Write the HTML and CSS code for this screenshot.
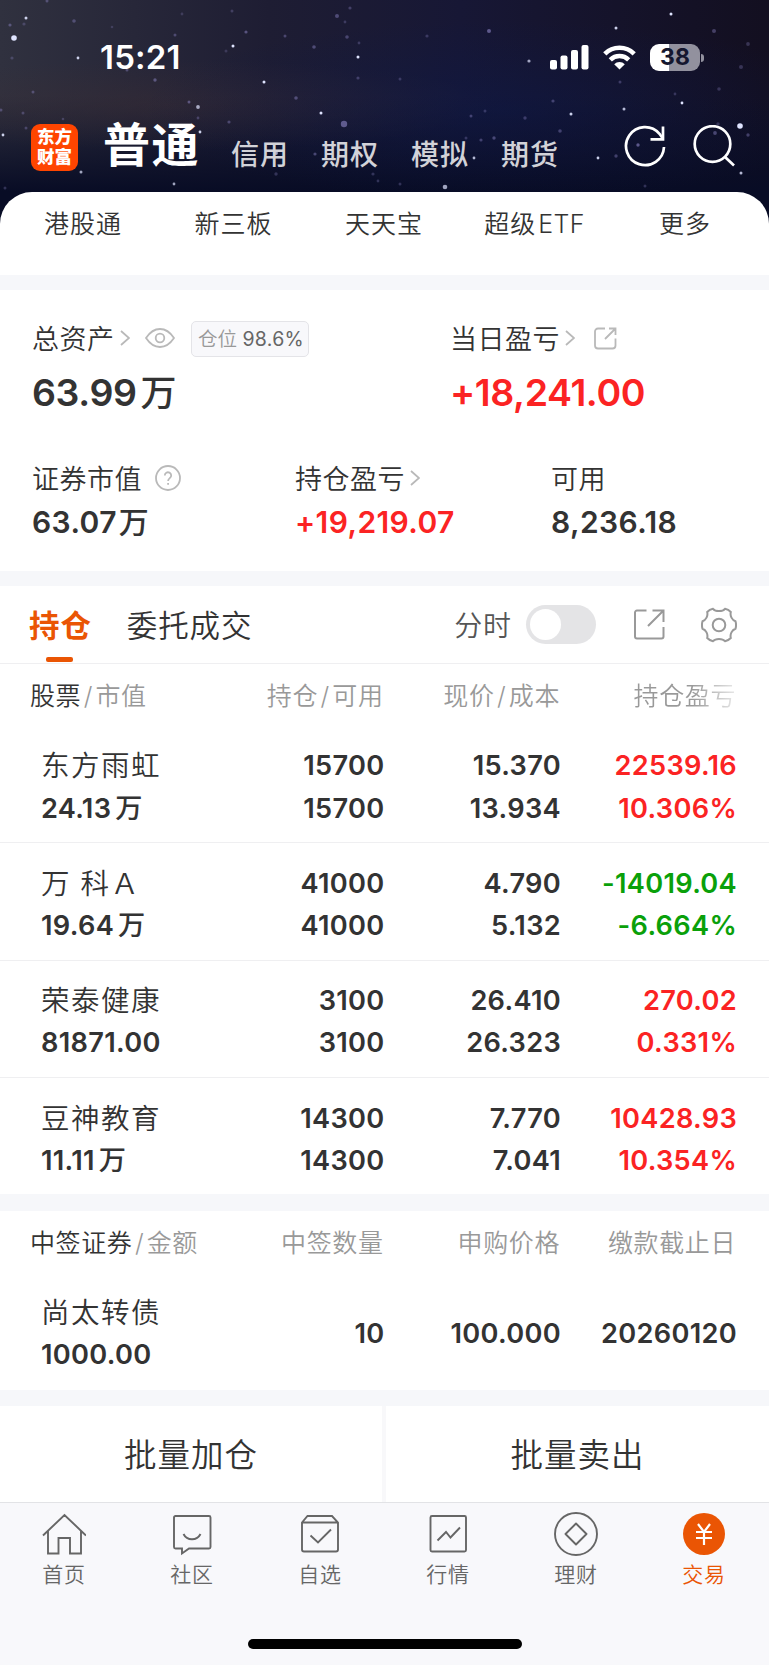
FILE: index.html
```html
<!DOCTYPE html>
<html lang="zh-CN">
<head>
  <meta charset="UTF-8" />
  <meta name="viewport" content="width=device-width, initial-scale=1.0" />
  <title>东方财富 - 交易</title>
  <link rel="stylesheet" href="styles.css">
</head>
<body>
  <header class="top">
    <svg class="stars" id="stars" viewBox="0 0 769 240"></svg>

    <div class="status-bar">
      <span class="time">15:21</span>
      <div class="status-icons">
        <svg width="39" height="25" viewBox="0 0 39 25" fill="#fff">
          <rect x="0" y="15" width="7" height="9.500" rx="2"/>
          <rect x="10.500" y="10.500" width="7" height="14" rx="2"/>
          <rect x="21" y="5" width="7" height="19.500" rx="2"/>
          <rect x="31.500" y="0" width="7" height="24.500" rx="2"/>
        </svg>
        <svg class="wifi" width="33" height="25" viewBox="0 0 33 25" fill="none" stroke="#fff" stroke-width="4.600">
          <path d="M1.800 8.800a21 21 0 0 1 29.400 0"/>
          <path d="M7.300 14.800a13.200 13.200 0 0 1 18.400 0"/>
          <path d="M16.500 24.500l-5.300-5.300a7.500 7.500 0 0 1 10.600 0z" fill="#fff" stroke="none"/>
        </svg>
        <div class="battery"><span>38</span></div>
      </div>
    </div>

    <nav class="accounts">
      <div class="logo"><span>东方</span><span>财富</span></div>
      <strong>普通</strong>
      <a>信用</a>
      <a>期权</a>
      <a>模拟</a>
      <a>期货</a>
      <div class="top-icons">
        <svg width="42" height="42" viewBox="0 0 42 42" fill="none" stroke="#fff" stroke-width="2.700">
          <path d="M40 22a19 19 0 1 1-4.500-13.200l3.500 5"/>
          <path d="M39 1.500v12.800H26.500"/>
        </svg>
        <svg width="42" height="42" viewBox="0 0 42 42" fill="none" stroke="#fff" stroke-width="2.700">
          <circle cx="19.500" cy="19" r="17.800"/>
          <path d="M31.500 31.500l9.500 9"/>
        </svg>
      </div>
    </nav>
  </header>

  <section class="shortcuts">
    <a>港股通</a>
    <a>新三板</a>
    <a>天天宝</a>
    <a>超级<span>ETF</span></a>
    <a>更多</a>
  </section>

  <section class="assets">
    <div class="assets-main">
      <div class="asset">
        <div class="label">总资产
          <svg class="arrow" width="10" height="16" viewBox="0 0 10 16"><path d="M1 1l8 7-8 7"/></svg>
          <svg class="eye" width="30" height="20" viewBox="0 0 30 20"><path d="M1 10C5 4 10 1 15 1s10 3 14 9c-4 6-9 9-14 9S5 16 1 10z"/><circle cx="15" cy="10" r="4.300"/></svg>
          <span class="position">仓位 <b>98.6%</b></span>
        </div>
        <div class="value">63.99<i>万</i></div>
      </div>
      <div class="asset">
        <div class="label">当日盈亏
          <svg class="arrow" width="10" height="16" viewBox="0 0 10 16"><path d="M1 1l8 7-8 7"/></svg>
          <svg class="share-small" width="23" height="23" viewBox="0 0 23 23"><path d="M11 1.500H4A3 3 0 0 0 1 4.500V18.500a3 3 0 0 0 3 3H18.500a3 3 0 0 0 3-3V11.500M15 1.500h6.500V8M21.500 1.500L11 12"/></svg>
        </div>
        <div class="value red">+18,241.00</div>
      </div>
    </div>
    <div class="assets-sub">
      <div class="asset">
        <div class="label">证券市值
          <svg class="help" width="26" height="26" viewBox="0 0 26 26"><circle cx="13" cy="13" r="12"/><path d="M9.800 10.500a3.200 3.200 0 1 1 5 2.600c-1.200.900-1.700 1.400-1.700 2.900M13.100 18v1.800"/></svg>
        </div>
        <div class="value">63.07<i>万</i></div>
      </div>
      <div class="asset">
        <div class="label">持仓盈亏
          <svg class="arrow" width="10" height="16" viewBox="0 0 10 16"><path d="M1 1l8 7-8 7"/></svg>
        </div>
        <div class="value red">+19,219.07</div>
      </div>
      <div class="asset">
        <div class="label">可用</div>
        <div class="value">8,236.18</div>
      </div>
    </div>
  </section>

  <section class="holdings">
    <div class="tabs">
      <a class="active">持仓</a>
      <a>委托成交</a>
      <div class="tools">
        <span>分时</span>
        <div class="switch"></div>
        <svg width="31" height="31" viewBox="0 0 31 31"><path d="M12.500 1.500h-9.500a2 2 0 0 0-2 2V27.500a2 2 0 0 0 2 2H27.500a2 2 0 0 0 2-2V18M18.500 1.500h11V13M29.500 1.500L14 17"/></svg>
        <svg class="gear" width="36" height="36" viewBox="0 0 36 36"><path d="M12 1.800C14.500 4.800 21.500 4.800 24 1.800Q27.500 2.500 29.800 5C28.800 9 31 13 34.500 14.200Q35.600 18 34.500 21.800C31 23 28.800 27 29.800 31Q27.500 33.500 24 34.200C21.500 31.200 14.500 31.200 12 34.200Q8.500 33.500 6.200 31C7.200 27 5 23 1.500 21.800Q.400 18 1.500 14.200C5 13 7.200 9 6.200 5Q8.500 2.500 12 1.800z"/><circle cx="18" cy="18" r="6.300"/></svg>
      </div>
    </div>
    <div class="row head">
      <span><em>股票</em><s>/</s>市值</span>
      <span>持仓<s>/</s>可用</span>
      <span>现价<s>/</s>成本</span>
      <span class="fade">持仓盈亏</span>
    </div>
    <div class="row">
      <div><span class="name">东方雨虹</span><b>24.13<i>万</i></b></div>
      <div><b>15700</b><b>15700</b></div>
      <div><b>15.370</b><b>13.934</b></div>
      <div class="red"><b>22539.16</b><b>10.306%</b></div>
    </div>
    <div class="row">
      <div><span class="name">万 科Ａ</span><b>19.64<i>万</i></b></div>
      <div><b>41000</b><b>41000</b></div>
      <div><b>4.790</b><b>5.132</b></div>
      <div class="green"><b>-14019.04</b><b>-6.664%</b></div>
    </div>
    <div class="row">
      <div><span class="name">荣泰健康</span><b>81871.00</b></div>
      <div><b>3100</b><b>3100</b></div>
      <div><b>26.410</b><b>26.323</b></div>
      <div class="red"><b>270.02</b><b>0.331%</b></div>
    </div>
    <div class="row">
      <div><span class="name">豆神教育</span><b>11.11<i>万</i></b></div>
      <div><b>14300</b><b>14300</b></div>
      <div><b>7.770</b><b>7.041</b></div>
      <div class="red"><b>10428.93</b><b>10.354%</b></div>
    </div>
  </section>

  <section class="lots">
    <div class="row head">
      <span><em>中签证券</em><s>/</s>金额</span>
      <span>中签数量</span>
      <span>申购价格</span>
      <span>缴款截止日</span>
    </div>
    <div class="row">
      <div><span class="name">尚太转债</span><b>1000.00</b></div>
      <div><b>10</b></div>
      <div><b>100.000</b></div>
      <div><b>20260120</b></div>
    </div>
  </section>

  <div class="actions">
    <a>批量加仓</a>
    <a>批量卖出</a>
  </div>

  <footer class="bottom">
    <nav>
      <a>
        <svg width="44" height="44" viewBox="0 0 44 44"><path d="M1 23.500L22.500 3 44 23.500M6 19v22.500H16.500V26H28v15.500H39V19"/></svg>
        首页
      </a>
      <a>
        <svg width="44" height="44" viewBox="0 0 44 44"><path d="M5.500 4H39a1.500 1.500 0 0 1 1.500 1.500V35a1.500 1.500 0 0 1-1.500 1.500H19L12 41.500v-5H5.500A1.500 1.500 0 0 1 4 35V5.500A1.500 1.500 0 0 1 5.500 4zM13.500 22c3.500 7 13.500 7 17 0"/></svg>
        社区
      </a>
      <a>
        <svg width="44" height="44" viewBox="0 0 44 44"><path d="M9.500 4H34l6 6.500V37.500a2 2 0 0 1-2 2H6a2 2 0 0 1-2-2V10.500zM4 10.500H40M12.500 23.500l7.500 7L33 17.500"/></svg>
        自选
      </a>
      <a>
        <svg width="44" height="44" viewBox="0 0 44 44"><rect x="4.500" y="4" width="35.500" height="35.500" rx="1.500"/><path d="M11.500 28.500l8.500-8.500 4.500 5.500 9.500-10"/></svg>
        行情
      </a>
      <a>
        <svg width="44" height="44" viewBox="0 0 44 44"><circle cx="22" cy="22" r="21"/><path d="M22 11.500L32.500 22 22 32.500 11.500 22z" stroke-linejoin="round"/></svg>
        理财
      </a>
      <a class="active">
        <svg width="44" height="44" viewBox="0 0 44 44"><circle cx="22" cy="22" r="21" fill="#ea5504" stroke="none"/><path d="M16 12L22 20 28 12M22 20V33M14 20H30M14 26H30" stroke="#fff" stroke-width="2.200"/></svg>
        交易
      </a>
    </nav>
    <div class="home-indicator"></div>
  </footer>

  <script>
    // x, y, radius, opacity
    const stars = [
      [14, 38, 2.8, 1], [26, 18, 1.5, .9], [10, 25, 1.6, .45], [24, 24, 1.6, .3], [74, 21, 1.8, .4],
      [47, 1, 1.5, .4], [78, 58, 1.4, .9], [12, 58, 1.6, .3], [33, 92, 1.5, .4], [23, 113, 1.5, .35],
      [3, 135, 1.4, .9], [1, 110, 1.5, .4], [26, 128, 1.5, .35], [63, 119, 1.3, .3], [81, 172, 1.5, .7],
      [5, 188, 1.5, .3], [155, 80, 1.7, .5], [175, 35, 1.5, .4], [182, 14, 1.4, .25], [127, 70, 1.5, .4],
      [112, 27, 1.3, .25], [189, 102, 1.5, .5], [198, 107, 1.9, .7], [198, 118, 1.4, .35], [200, 132, 1.4, .9],
      [229, 122, 1.6, .4], [233, 46, 1.5, 1], [226, 51, 1.5, .25], [246, 32, 1.6, .5], [232, 11, 1.5, .3],
      [264, 82, 1.5, 1], [285, 36, 1.5, .4], [296, 98, 1.8, .45], [321, 113, 1.5, 1], [344, 124, 3.2, .6],
      [314, 47, 1.8, .45], [337, 16, 2, .45], [350, 8, 1.6, .35], [345, 22, 1.4, .3], [347, 37, 1.8, .4],
      [358, 57, 1.5, 1], [358, 78, 1.6, .35], [359, 43, 1.4, .3], [174, 184, 1.4, .7], [276, 174, 1.7, .3],
      [315, 154, 1.6, .45], [373, 174, 1.6, .3], [378, 181, 1.4, .3], [400, 79, 1.5, .3], [427, 36, 1.6, .3],
      [489, 31, 2, .6], [529, 61, 1.6, .7], [616, 28, 1.5, .9], [671, 14, 1.5, 1], [714, 31, 2, .4],
      [748, 44, 1.9, .3], [741, 67, 2, .3], [719, 89, 1.8, .3], [682, 103, 1.4, 1], [624, 109, 1.5, .8],
      [571, 114, 1.5, .9], [553, 101, 1.6, .4], [525, 118, 1.7, .35], [471, 116, 1.5, .4], [485, 111, 1.5, .3],
      [560, 131, 1.8, .4], [494, 138, 1.7, .45], [481, 140, 1.6, .4], [466, 138, 1.5, .3], [474, 158, 1.4, .8],
      [518, 148, 2.4, .8], [598, 158, 1.4, .9], [638, 145, 1.7, .6], [740, 126, 2.8, 1], [748, 135, 1.7, .4],
      [718, 124, 1.7, .3], [715, 133, 1.9, .45], [741, 173, 1.5, .8], [616, 156, 1.7, .4], [445, 187, 2.3, .7],
      [400, 184, 1.5, .3], [645, 186, 1.5, .3], [675, 94, 1.4, .3], [620, 82, 1.5, .35], [276, 153, 1.9, .7]
    ];
    document.getElementById('stars').innerHTML = stars.map(([x, y, r, o]) =>
      `<circle cx="${x}" cy="${y}" r="${r}" fill="${o > .65 ? '#dfe4ff' : '#8f87c8'}" opacity="${o}"/>`
    ).join('');
  </script>
</body>
</html>
```
FILE: styles.css
```css
* {
  box-sizing: border-box;
}
body {
  margin: 0;
  font-family: Inter, 'Noto Sans CJK SC', sans-serif;
  font-weight: 350;
  color: #333;
  background: #fff;
}
i, em {
  font-style: normal;
}
.red {
  color: #fb2323;
}
.green {
  color: #0aa00a;
}

/* header */
.top {
  position: relative;
  height: 240px;
  margin-bottom: -48px;
  background:
    radial-gradient(ellipse 360px 90px at 500px 110px, rgba(12, 24, 72, .5), transparent),
    radial-gradient(ellipse 330px 45px at 170px 105px, rgba(58, 45, 52, .5), transparent),
    linear-gradient(to bottom, transparent 40%, #080c25 80%),
    linear-gradient(to right, #30313f, #1e1d33 35%, #171735 60%, #130f20);
}
.stars {
  position: absolute;
  inset: 0;
  filter: blur(.5px);
}
.status-bar {
  position: relative;
  display: flex;
  justify-content: space-between;
  padding: 37px 64px 0 100px;
  color: #fff;
}
.time {
  font-size: 33px;
  font-weight: 600;
  line-height: 41px;
  letter-spacing: .200px;
}
.status-icons {
  display: flex;
  align-items: center;
}
.wifi {
  margin: 0 14px 0 14px;
}
.battery {
  position: relative;
  width: 50px;
  height: 27px;
  border-radius: 9px;
  background: linear-gradient(to right, #fff 39%, #92919e 39%);
  color: #15172f;
  font-size: 23px;
  font-weight: 700;
  line-height: 27px;
  text-align: center;
  margin-right: 5px;
}
.battery::after {
  content: '';
  position: absolute;
  right: -4px;
  top: 10px;
  width: 3px;
  height: 8px;
  border-radius: 0 3px 3px 0;
  background: #92919e;
}
.accounts {
  position: relative;
  display: flex;
  align-items: center;
  height: 60px;
  margin-top: 38px;
  padding: 0 34px 0 31px;
}
.logo {
  display: flex;
  flex-direction: column;
  justify-content: center;
  width: 47px;
  height: 47px;
  margin-top: 2px;
  border-radius: 9px;
  background: #ff4500;
  color: #fff;
  font-size: 17.500px;
  font-weight: 900;
  line-height: 20px;
  text-align: center;
}
.accounts strong {
  margin: -2px 8px 0 25px;
  font-size: 47px;
  font-weight: 700;
  line-height: 60px;
  letter-spacing: 1.500px;
  color: #fff;
}
.accounts a {
  width: 90px;
  padding: 17px 0 0 23px;
  font-size: 28px;
  font-weight: 500;
  line-height: 34px;
  letter-spacing: 1px;
  white-space: nowrap;
  color: #d2d2d8;
}
.top-icons {
  display: flex;
  gap: 27px;
  margin-left: auto;
}

/* shortcuts */
.shortcuts {
  position: relative;
  display: grid;
  grid-template-columns: repeat(5, 150.500px);
  justify-content: center;
  height: 98px;
  padding: 15px 1px 0 0;
  border-bottom: 15px solid #f6f7fa;
  border-radius: 32px 32px 0 0;
  background: #fff;
  font-size: 25px;
  line-height: 34px;
  letter-spacing: 1px;
  text-align: center;
}
.shortcuts span {
  margin-left: 2px;
  letter-spacing: .300px;
}

/* assets */
.assets {
  height: 296px;
  padding: 28px 32px 0;
  border-bottom: 15px solid #f6f7fa;
}
.assets-main {
  display: grid;
  grid-template-columns: 418px 1fr;
  height: 141px;
}
.assets-sub {
  display: grid;
  grid-template-columns: 263px 256px 1fr;
}
.label {
  display: flex;
  align-items: center;
  height: 38px;
  font-size: 27px;
  letter-spacing: .500px;
  white-space: nowrap;
}
.label svg {
  position: relative;
  top: 1px;
  fill: none;
  stroke: #b9b9b9;
  stroke-width: 1.800;
}
.label .arrow {
  margin-left: 5px;
}
.eye {
  margin-left: 15px;
}
.share-small {
  margin-left: 19px;
}
.help {
  margin-left: 13px;
}
.position {
  width: 118px;
  margin: 3px 0 0 16px;
  padding-left: 3px;
  border: 1.500px solid #e4e4e8;
  border-radius: 5px;
  background: #f8f8fb;
  color: #999;
  font-size: 19.500px;
  line-height: 34px;
  letter-spacing: 0;
  text-align: center;
}
.position b {
  font-weight: 400;
  letter-spacing: .300px;
  color: #666;
}
.value {
  font-size: 37.500px;
  font-weight: 600;
  line-height: 46px;
  letter-spacing: -.400px;
  margin-top: 14px;
}
.value i {
  margin-left: 4px;
  font-size: 36px;
  font-weight: 500;
}
.assets-sub .value {
  font-size: 30px;
  line-height: 36px;
  letter-spacing: .400px;
  margin-top: 8px;
}
.assets-sub .label {
  margin-top: -1px;
}
.assets-sub i {
  margin-left: 2px;
  font-size: 30px;
}

/* tabs */
.tabs {
  display: flex;
  align-items: center;
  height: 78px;
  padding: 0 32px 0 29px;
  border-bottom: 1px solid #efeff1;
  font-size: 30.500px;
  letter-spacing: .900px;
}
.tabs a {
  position: relative;
  top: -1px;
  margin-right: 35px;
}
.tabs .active {
  color: #ea5504;
  font-weight: 700;
}
.tabs .active::after {
  content: '';
  position: absolute;
  left: 17px;
  bottom: -16px;
  width: 27px;
  height: 5px;
  border-radius: 2px;
  background: #ea5504;
}
.tools {
  display: flex;
  align-items: center;
  margin-left: auto;
  font-size: 28px;
  color: #555;
}
.tools span {
  margin-top: -2px;
}
.tools svg {
  margin-left: 38px;
  fill: none;
  stroke: #999;
  stroke-width: 2;
}
.tools .gear {
  margin-left: 36px;
}
.switch {
  width: 70px;
  height: 39px;
  margin-left: 14px;
  padding: 4px;
  border-radius: 20px;
  background: #e4e4e6;
}
.switch::before {
  content: '';
  display: block;
  width: 31px;
  height: 31px;
  border-radius: 50%;
  background: #fff;
}

/* tables */
.row {
  display: grid;
  grid-template-columns: 1fr 150px 176.500px 176px;
  align-items: center;
  height: 117.400px;
  padding: 7px 32px 0 41px;
  border-bottom: 1px solid #efeff1;
  font-size: 27.200px;
  text-align: right;
  white-space: nowrap;
}
.row:last-child {
  border-bottom: 0;
}
.row > :first-child {
  text-align: left;
}
.row b, .name {
  display: block;
  line-height: 42.500px;
}
.row b {
  font-weight: 600;
  letter-spacing: .300px;
}
.row i {
  margin-left: 4px;
  font-weight: 500;
}
.name {
  font-size: 28.500px;
  letter-spacing: 1.500px;
}
.row.head {
  height: 62px;
  padding: 0 33px 2px 30px;
  border: 0;
  color: #999;
  font-size: 25px;
  letter-spacing: .600px;
}
.head em {
  color: #333;
}
.head s {
  margin: 0 2.500px;
  text-decoration: none;
}
.fade {
  background: linear-gradient(to right, #999 75%, #e8e8e8);
  -webkit-background-clip: text;
  color: transparent;
}
.holdings {
  height: 625px;
  border-bottom: 17px solid #f6f7fa;
}
.lots {
  height: 195px;
  border-bottom: 16px solid #f6f7fa;
}
.lots .row:last-child {
  padding-top: 5px;
}

.actions {
  display: grid;
  grid-template-columns: 382px 1fr;
  gap: 4px;
  height: 96px;
  background: #f8f8fa;
}
.actions a {
  padding-top: 4px;
  background: #fff;
  font-size: 32.500px;
  line-height: 92px;
  letter-spacing: 1px;
  text-align: center;
}

/* bottom bar */
.bottom {
  height: 163px;
  border-top: 1px solid #e2e3e6;
  background: #f8f8fb;
}
.bottom nav {
  display: grid;
  grid-template-columns: repeat(6, 1fr);
  height: 136px;
  padding: 9px 1px 0 0;
}
.bottom a {
  display: flex;
  flex-direction: column;
  align-items: center;
  color: #666;
  font-size: 21px;
  line-height: 37px;
  letter-spacing: .700px;
}
.bottom svg {
  fill: none;
  stroke: #666;
  stroke-width: 1.900;
}
.bottom .active {
  color: #ea5504;
}
.home-indicator {
  width: 274px;
  height: 10px;
  margin: 0 auto;
  border-radius: 5px;
  background: #000;
}
```
